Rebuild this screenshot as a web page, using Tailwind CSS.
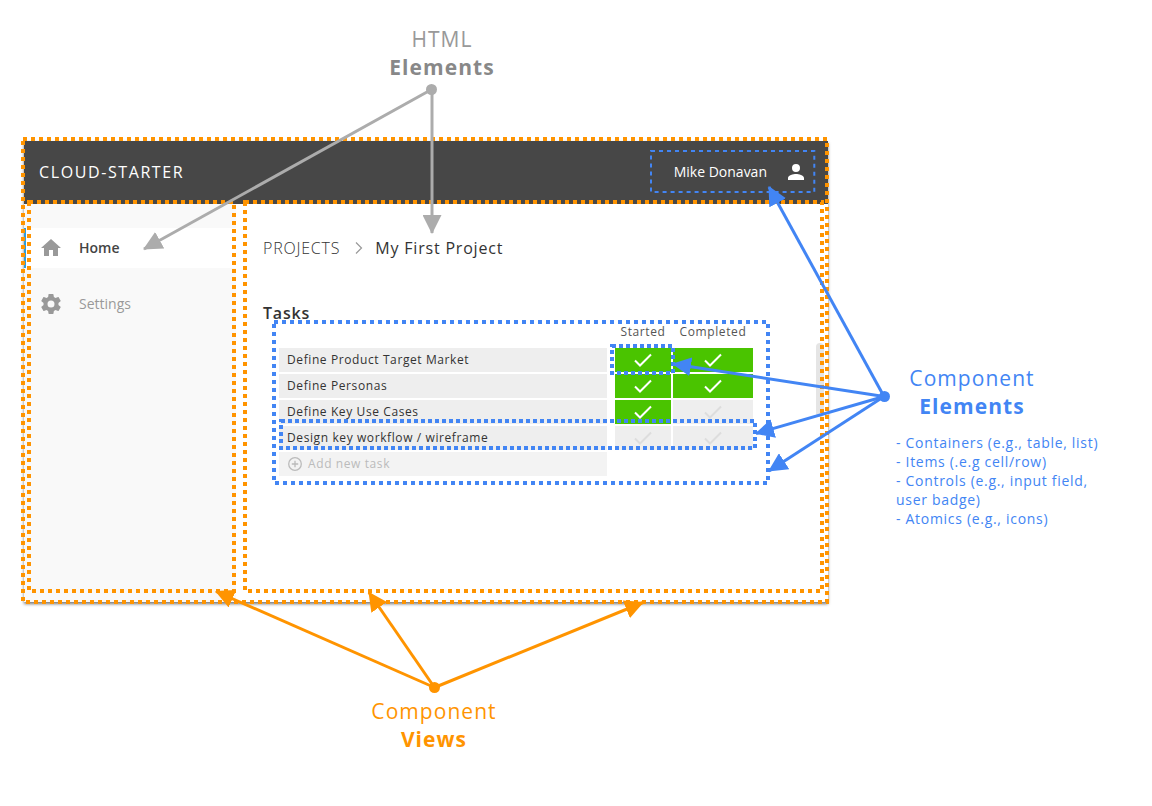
<!DOCTYPE html>
<html lang="en">
<head>
<meta charset="utf-8">
<title>Cloud-Starter component anatomy</title>
<script src="https://cdn.jsdelivr.net/npm/@tailwindcss/browser@4"></script>
</head>
<body class="relative min-h-screen bg-white font-['Open_Sans',sans-serif]">
<main class="grid grid-cols-[minmax(0,1fr)_256px] gap-x-17 pl-6">
  <h2 class="col-span-2 h-[141px] w-[836px] pt-[25px] text-center text-[21px] leading-7 font-normal tracking-wider text-[#888]"><span class="text-[#999]">HTML</span><br><b class="font-bold">Elements</b></h2>

  <section class="relative flex h-[461px] flex-col bg-white shadow-[0_2px_3px_#0008]" aria-label="Cloud-Starter">
    <header class="flex h-[63px] shrink-0 items-center justify-between bg-[#474747] pr-3.5 pb-0.5 pl-[15px] text-white">
      <h1 class="text-base tracking-widest">CLOUD-STARTER</h1>
      <button type="button" class="relative flex h-[41px] items-center gap-[17px] pr-1.5 pl-[23px] text-sm">
        Mike Donavan
        <svg class="size-6" viewBox="0 0 24 24" fill="currentColor"><path d="M12 12a4 4 0 1 0 0-8 4 4 0 0 0 0 8zm0 2c-2.67 0-8 1.34-8 4v2h16v-2c0-2.66-5.33-4-8-4z"/></svg>
        <svg class="absolute inset-0 size-full overflow-visible" aria-hidden="true"><rect width="100%" height="100%" fill="none" stroke="#4285f4" stroke-width="2" stroke-dasharray="4 4"/></svg>
      </button>
    </header>
    <div class="flex grow">
      <nav class="w-[212px] shrink-0 bg-[#f9f9f9] pt-6 text-sm">
        <a href="#home" class="flex h-10 items-center gap-4 border-l-2 border-[#2d9cdb] bg-white pl-[13px] font-semibold text-[#444]">
          <svg class="size-6 text-[#999]" viewBox="0 0 24 24" fill="currentColor"><path d="M10 20v-6h4v6h5v-8h3L12 3 2 12h3v8z"/></svg>
          Home
        </a>
        <a href="#settings" class="mt-4 flex h-10 items-center gap-4 pl-[15px] text-[#999]">
          <svg class="size-6" viewBox="0 0 24 24" fill="currentColor"><path d="M19.43 12.98c.04-.32.07-.64.07-.98s-.03-.66-.07-.98l2.11-1.65c.19-.15.24-.42.12-.64l-2-3.46c-.12-.22-.39-.3-.61-.22l-2.49 1c-.52-.4-1.08-.73-1.69-.98l-.38-2.65A.49.49 0 0 0 14 2h-4c-.25 0-.46.18-.49.42l-.38 2.65c-.61.25-1.17.59-1.69.98l-2.49-1c-.23-.09-.49 0-.61.22l-2 3.46c-.13.22-.07.49.12.64l2.11 1.65c-.04.32-.07.65-.07.98s.03.66.07.98l-2.11 1.65c-.19.15-.24.42-.12.64l2 3.46c.12.22.39.3.61.22l2.49-1c.52.4 1.08.73 1.69.98l.38 2.65c.03.24.24.42.49.42h4c.25 0 .46-.18.49-.42l.38-2.65c.61-.25 1.17-.59 1.69-.98l2.49 1c.23.09.49 0 .61-.22l2-3.46c.12-.22.07-.49-.12-.64zM12 15.500a3.500 3.500 0 1 1 0-7 3.500 3.500 0 0 1 0 7z"/></svg>
          Settings
        </a>
      </nav>
      <div class="relative grow pt-8 pr-[60px] pl-[27px] text-[#333]">
        <nav class="flex h-6 items-center gap-3 text-base" aria-label="Breadcrumb">
          <a href="#projects" class="font-light tracking-wider">PROJECTS</a>
          <svg class="h-3 w-[11px]" viewBox="0 0 11 12" fill="none" stroke="#999" stroke-width="1.2"><path d="M4 0.500l5.500 5.500L4 11.500"/></svg>
          <span class="tracking-wider">My First Project</span>
        </nav>
        <h2 class="mt-[43px] h-[19px] text-base leading-5 font-semibold tracking-wider">Tasks</h2>
        <div class="relative ml-[11px] h-[161px] pr-[13px] pl-[3px]">
          <table class="w-full table-fixed border-separate border-spacing-0.5 text-xs">
            <thead>
              <tr class="h-[22px] align-top text-[#555]">
                <th class="p-0" aria-label="Task"></th>
                <th class="w-14 p-0 font-normal tracking-wider">Started</th>
                <th class="w-20 p-0 font-normal tracking-wider">Completed</th>
              </tr>
            </thead>
            <tbody>
              <tr>
                <td class="border-r-6 border-white bg-[#eee] p-0 pl-2 tracking-wider">Define Product Target Market</td>
                <td class="p-0"><label class="grid h-6 place-items-center bg-[#eee] text-[#ddd] has-checked:bg-[#4ac400] has-checked:text-white"><input type="checkbox" checked aria-label="Started: Define Product Target Market" class="col-start-1 row-start-1 size-full appearance-none"><svg class="pointer-events-none col-start-1 row-start-1 h-4 w-5" viewBox="0 0 20 16" fill="none" stroke="currentColor" stroke-width="2"><path d="M2 8.500l5 5L18 2.500"/></svg></label></td>
                <td class="p-0"><label class="grid h-6 place-items-center bg-[#eee] text-[#ddd] has-checked:bg-[#4ac400] has-checked:text-white"><input type="checkbox" checked aria-label="Completed: Define Product Target Market" class="col-start-1 row-start-1 size-full appearance-none"><svg class="pointer-events-none col-start-1 row-start-1 h-4 w-5" viewBox="0 0 20 16" fill="none" stroke="currentColor" stroke-width="2"><path d="M2 8.500l5 5L18 2.500"/></svg></label></td>
              </tr>
              <tr>
                <td class="border-r-6 border-white bg-[#eee] p-0 pl-2 tracking-wider">Define Personas</td>
                <td class="p-0"><label class="grid h-6 place-items-center bg-[#eee] text-[#ddd] has-checked:bg-[#4ac400] has-checked:text-white"><input type="checkbox" checked aria-label="Started: Define Personas" class="col-start-1 row-start-1 size-full appearance-none"><svg class="pointer-events-none col-start-1 row-start-1 h-4 w-5" viewBox="0 0 20 16" fill="none" stroke="currentColor" stroke-width="2"><path d="M2 8.500l5 5L18 2.500"/></svg></label></td>
                <td class="p-0"><label class="grid h-6 place-items-center bg-[#eee] text-[#ddd] has-checked:bg-[#4ac400] has-checked:text-white"><input type="checkbox" checked aria-label="Completed: Define Personas" class="col-start-1 row-start-1 size-full appearance-none"><svg class="pointer-events-none col-start-1 row-start-1 h-4 w-5" viewBox="0 0 20 16" fill="none" stroke="currentColor" stroke-width="2"><path d="M2 8.500l5 5L18 2.500"/></svg></label></td>
              </tr>
              <tr>
                <td class="border-r-6 border-white bg-[#eee] p-0 pl-2 tracking-wider">Define Key Use Cases</td>
                <td class="p-0"><label class="grid h-6 place-items-center bg-[#eee] text-[#ddd] has-checked:bg-[#4ac400] has-checked:text-white"><input type="checkbox" checked aria-label="Started: Define Key Use Cases" class="col-start-1 row-start-1 size-full appearance-none"><svg class="pointer-events-none col-start-1 row-start-1 h-4 w-5" viewBox="0 0 20 16" fill="none" stroke="currentColor" stroke-width="2"><path d="M2 8.500l5 5L18 2.500"/></svg></label></td>
                <td class="p-0"><label class="grid h-6 place-items-center bg-[#eee] text-[#ddd] has-checked:bg-[#4ac400] has-checked:text-white"><input type="checkbox" aria-label="Completed: Define Key Use Cases" class="col-start-1 row-start-1 size-full appearance-none"><svg class="pointer-events-none col-start-1 row-start-1 h-4 w-5" viewBox="0 0 20 16" fill="none" stroke="currentColor" stroke-width="2"><path d="M2 8.500l5 5L18 2.500"/></svg></label></td>
              </tr>
              <tr>
                <td class="border-r-6 border-white bg-[#eee] p-0 pl-2 tracking-wider">Design key workflow / wireframe</td>
                <td class="p-0"><label class="grid h-6 place-items-center bg-[#eee] text-[#ddd] has-checked:bg-[#4ac400] has-checked:text-white"><input type="checkbox" aria-label="Started: Design key workflow / wireframe" class="col-start-1 row-start-1 size-full appearance-none"><svg class="pointer-events-none col-start-1 row-start-1 h-4 w-5" viewBox="0 0 20 16" fill="none" stroke="currentColor" stroke-width="2"><path d="M2 8.500l5 5L18 2.500"/></svg></label></td>
                <td class="p-0"><label class="grid h-6 place-items-center bg-[#eee] text-[#ddd] has-checked:bg-[#4ac400] has-checked:text-white"><input type="checkbox" aria-label="Completed: Design key workflow / wireframe" class="col-start-1 row-start-1 size-full appearance-none"><svg class="pointer-events-none col-start-1 row-start-1 h-4 w-5" viewBox="0 0 20 16" fill="none" stroke="currentColor" stroke-width="2"><path d="M2 8.500l5 5L18 2.500"/></svg></label></td>
              </tr>
              <tr>
                <td class="border-r-6 border-white bg-[#f3f3f3] p-0 pl-2"><button type="button" class="flex h-6 items-center gap-[5px] tracking-wider text-[#bbb]"><svg class="size-4" viewBox="0 0 16 16" fill="none" stroke="currentColor" stroke-width="1.3"><circle cx="8" cy="8" r="6.3"/><path d="M8 4.800v6.400M4.800 8h6.400"/></svg>Add new task</button></td>
              </tr>
            </tbody>
          </table>
          <!-- outlines: whole table, one row, one cell -->
          <svg class="pointer-events-none absolute inset-0 size-full overflow-visible" aria-hidden="true"><rect width="100%" height="100%" fill="none" stroke="#4285f4" stroke-width="4" stroke-dasharray="4 4"/></svg>
          <div class="pointer-events-none absolute top-[99px] right-[13px] left-[7px] h-[27px]"><svg class="size-full overflow-visible" aria-hidden="true"><rect width="100%" height="100%" fill="none" stroke="#4285f4" stroke-width="4" stroke-dasharray="4 3"/></svg></div>
          <div class="pointer-events-none absolute top-6 right-[95px] h-[27px] w-[61px]"><svg class="size-full overflow-visible" aria-hidden="true"><rect width="100%" height="100%" fill="none" stroke="#4285f4" stroke-width="4" stroke-dasharray="4 3"/></svg></div>
        </div>
        <div class="absolute top-[139px] right-1 h-[74px] w-2 rounded-full bg-[#e5e5e5]"></div>
      </div>
    </div>
    <!-- outlines: application, sidebar view, content view -->
    <div class="pointer-events-none absolute -top-0.5 right-px bottom-0 -left-px"><svg class="size-full overflow-visible" aria-hidden="true"><rect width="100%" height="100%" fill="none" stroke="#ff9400" stroke-width="4" stroke-dasharray="4 4"/></svg></div>
    <div class="pointer-events-none absolute top-[61px] bottom-[11px] left-[5px] w-[205px]"><svg class="size-full overflow-visible" aria-hidden="true"><rect width="100%" height="100%" fill="none" stroke="#ff9400" stroke-width="4" stroke-dasharray="4 4"/></svg></div>
    <div class="pointer-events-none absolute top-[61px] right-1.5 bottom-[11px] left-[221px]"><svg class="size-full overflow-visible" aria-hidden="true"><rect width="100%" height="100%" fill="none" stroke="#ff9400" stroke-width="4" stroke-dasharray="4 4"/></svg></div>
  </section>

  <aside class="pt-[223px] text-[#4285f4]">
    <h2 class="w-[152px] text-center text-[21px] leading-7 font-normal tracking-wider">Component<br><b class="font-bold">Elements</b></h2>
    <p class="mt-[13px] w-56 text-sm leading-[19px] tracking-wider">- Containers (e.g., table, list)<br>- Items (.e.g cell/row)<br>- Controls (e.g., input field,<br>user badge)<br>- Atomics (e.g., icons)</p>
  </aside>

  <h2 class="col-span-2 w-[820px] pt-[95px] text-center text-[21px] leading-7 font-normal tracking-wider text-[#ff9400]">Component<br><b class="font-bold">Views</b></h2>
</main>

<!-- arrows from each caption to the parts it names -->
<svg class="pointer-events-none absolute top-0 left-0" width="1152" height="806" fill="none" stroke-width="3" aria-hidden="true">
  <defs>
    <marker id="gray" markerUnits="userSpaceOnUse" markerWidth="19" markerHeight="19" refX="18" refY="9.5" orient="auto"><path d="M0 0L19 9.5 0 19z" fill="#acacac"/></marker>
    <marker id="blue" markerUnits="userSpaceOnUse" markerWidth="19" markerHeight="19" refX="18" refY="9.5" orient="auto"><path d="M0 0L19 9.5 0 19z" fill="#4285f4"/></marker>
    <marker id="orange" markerUnits="userSpaceOnUse" markerWidth="19" markerHeight="19" refX="18" refY="9.5" orient="auto"><path d="M0 0L19 9.5 0 19z" fill="#ff9400"/></marker>
  </defs>
  <g stroke="#acacac"><path d="M431.5 89.5L144 249" marker-end="url(#gray)"/><path d="M432 89.5V233" marker-end="url(#gray)"/></g>
  <circle cx="431.5" cy="89.5" r="5.5" fill="#acacac"/>
  <g stroke="#4285f4"><path d="M884 396.5L769 187" marker-end="url(#blue)"/><path d="M884 396.5L673 364" marker-end="url(#blue)"/><path d="M884 396.5L756 433.5" marker-end="url(#blue)"/><path d="M884 396.5L769 471" marker-end="url(#blue)"/></g>
  <circle cx="884.5" cy="396.5" r="5.5" fill="#4285f4"/>
  <g stroke="#ff9400"><path d="M434.5 687.5L216 591.5" marker-end="url(#orange)"/><path d="M434.5 687.5L369 592.5" marker-end="url(#orange)"/><path d="M434.5 687.5L643 602.5" marker-end="url(#orange)"/></g>
  <circle cx="434.5" cy="687.5" r="5.5" fill="#ff9400"/>
</svg>
</body>
</html>
